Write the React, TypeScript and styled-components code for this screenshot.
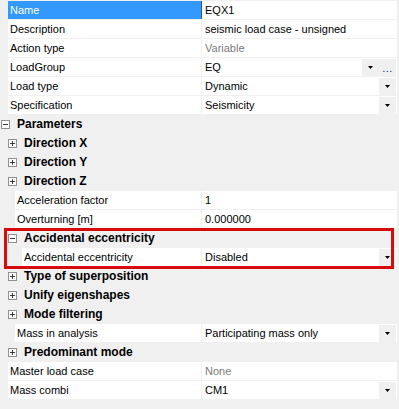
import React from "react";
import styled, { createGlobalStyle } from "styled-components";

const GlobalStyle = createGlobalStyle`
  html, body {
    margin: 0;
    padding: 0;
    background: #f0f0f0;
  }
  body {
    font-family: "Liberation Sans", Arial, sans-serif;
    font-size: 11px;
    color: #000;
  }
`;

type Editor = "text" | "drop" | "dropMore";

interface GridItem {
  kind: "prop" | "cat";
  depth: number;
  name: string;
  value?: string;
  editor?: Editor;
  readOnly?: boolean;
  selected?: boolean;
  expanded?: boolean;
}

const items: GridItem[] = [
  { kind: "prop", depth: 0, name: "Name", value: "EQX1", selected: true },
  { kind: "prop", depth: 0, name: "Description", value: "seismic load case - unsigned" },
  { kind: "prop", depth: 0, name: "Action type", value: "Variable", readOnly: true },
  { kind: "prop", depth: 0, name: "LoadGroup", value: "EQ", editor: "dropMore" },
  { kind: "prop", depth: 0, name: "Load type", value: "Dynamic", editor: "drop" },
  { kind: "prop", depth: 0, name: "Specification", value: "Seismicity", editor: "drop" },
  { kind: "cat", depth: 0, name: "Parameters", expanded: true },
  { kind: "cat", depth: 1, name: "Direction X" },
  { kind: "cat", depth: 1, name: "Direction Y" },
  { kind: "cat", depth: 1, name: "Direction Z" },
  { kind: "prop", depth: 1, name: "Acceleration factor", value: "1" },
  { kind: "prop", depth: 1, name: "Overturning [m]", value: "0.000000" },
  { kind: "cat", depth: 1, name: "Accidental eccentricity", expanded: true },
  { kind: "prop", depth: 2, name: "Accidental eccentricity", value: "Disabled", editor: "drop" },
  { kind: "cat", depth: 1, name: "Type of superposition" },
  { kind: "cat", depth: 1, name: "Unify eigenshapes" },
  { kind: "cat", depth: 1, name: "Mode filtering" },
  { kind: "prop", depth: 1, name: "Mass in analysis", value: "Participating mass only", editor: "drop" },
  { kind: "cat", depth: 1, name: "Predominant mode" },
  { kind: "prop", depth: 0, name: "Master load case", value: "None", readOnly: true },
  { kind: "prop", depth: 0, name: "Mass combi", value: "CM1", editor: "drop" },
];

const NAME_COL = 202;

const Grid = styled.div`
  width: 399px;
  height: 409px;
  padding: 1px 2px 0 0;
  box-sizing: border-box;
  background: #f0f0f0;
  overflow: hidden;
`;

const PropRow = styled.div`
  display: flex;
  height: 18px;
  margin-bottom: 1px;
`;

const NameCell = styled.div<{ $depth: number; $selected?: boolean }>`
  flex: 0 0 ${(p) => NAME_COL - 8 - p.$depth * 7}px;
  margin-left: ${(p) => 8 + p.$depth * 7}px;
  box-sizing: border-box;
  padding-left: 2px;
  line-height: 18px;
  white-space: nowrap;
  overflow: hidden;
  background: ${(p) => (p.$selected ? "#3399ff" : "#fff")};
  color: ${(p) => (p.$selected ? "#fff" : "#000")};
  border-right: 1px solid ${(p) => (p.$selected ? "#1c5da6" : "#f0f0f0")};
`;

const ValueCell = styled.div<{ $readOnly?: boolean }>`
  flex: 1;
  display: flex;
  align-items: stretch;
  background: #fff;
  color: ${(p) => (p.$readOnly ? "#7a7a7a" : "#000")};
  min-width: 0;
`;

const ValueText = styled.span`
  flex: 1;
  padding-left: 3px;
  line-height: 18px;
  white-space: nowrap;
  overflow: hidden;
`;

const EditButton = styled.div`
  flex: 0 0 17px;
  display: flex;
  align-items: center;
  justify-content: center;
  background: #f0f0f0;
  margin: 1px 1px 0 0;
  font-size: 11px;
  color: #1a1a6a;
  letter-spacing: 0.5px;
  &:not(:last-child) {
    margin-right: 0;
  }
`;

const CatRow = styled.div<{ $depth: number }>`
  display: flex;
  align-items: center;
  height: 18px;
  margin-bottom: 1px;
  padding-left: ${(p) => 1 + p.$depth * 7}px;
`;

const Expander = styled.div`
  width: 9px;
  height: 9px;
  box-sizing: border-box;
  border: 1px solid #919191;
  background: #fff;
  display: flex;
  align-items: center;
  justify-content: center;
  margin-right: 7px;
`;

const CatLabel = styled.span`
  font-size: 12px;
  font-weight: bold;
  line-height: 18px;
  white-space: nowrap;
`;

const Highlight = styled.div`
  position: relative;
  &::after {
    content: "";
    position: absolute;
    left: 4px;
    right: 3px;
    top: -1px;
    bottom: -3px;
    border: 3px solid #d70b0b;
    pointer-events: none;
  }
`;

const DropArrow = () => (
  <svg width="5" height="3" viewBox="0 0 5 3">
    <polygon points="0,0 5,0 2.5,3" fill="#000" />
  </svg>
);

const ExpandGlyph = ({ open }: { open?: boolean }) => (
  <svg width="7" height="7" viewBox="0 0 7 7">
    <rect x="1" y="3" width="5" height="1" fill="#3a3a3a" />
    {!open && <rect x="3" y="1" width="1" height="5" fill="#3a3a3a" />}
  </svg>
);

const Item = ({ item }: { item: GridItem }) => {
  if (item.kind === "cat") {
    return (
      <CatRow $depth={item.depth}>
        <Expander>
          <ExpandGlyph open={item.expanded} />
        </Expander>
        <CatLabel>{item.name}</CatLabel>
      </CatRow>
    );
  }
  return (
    <PropRow>
      <NameCell $depth={item.depth} $selected={item.selected}>
        {item.name}
      </NameCell>
      <ValueCell $readOnly={item.readOnly}>
        <ValueText>{item.value}</ValueText>
        {(item.editor === "drop" || item.editor === "dropMore") && (
          <EditButton>
            <DropArrow />
          </EditButton>
        )}
        {item.editor === "dropMore" && <EditButton>...</EditButton>}
      </ValueCell>
    </PropRow>
  );
};

export default function App() {
  return (
    <>
      <GlobalStyle />
      <Grid>
        {items.slice(0, 12).map((it, i) => (
          <Item key={i} item={it} />
        ))}
        <Highlight>
          {items.slice(12, 14).map((it, i) => (
            <Item key={i} item={it} />
          ))}
        </Highlight>
        {items.slice(14).map((it, i) => (
          <Item key={i} item={it} />
        ))}
      </Grid>
    </>
  );
}
